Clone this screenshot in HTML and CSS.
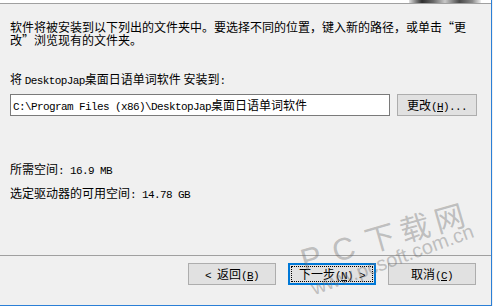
FILE: index.html
```html
<!DOCTYPE html>
<html lang="zh-CN">
<head>
<meta charset="utf-8">
<title>安装位置</title>
<link rel="stylesheet" href="styles.css">
</head>
<body>
<div class="window">
  <div class="header"><div class="banner"></div></div>
  <div class="content">
    <p class="intro">软件将被安装到以下列出的文件夹中。要选择不同的位置，键入新的路径，或单击“更改”浏览现有的文件夹。</p>
    <p class="label">将 <span class="a">DesktopJap</span>桌面日语单词软件 安装到<span class="a">:</span></p>
    <div class="path-row">
      <div class="path"><span class="a">C:\Program Files (x86)\DesktopJap</span>桌面日语单词软件</div>
      <button class="btn">更改<span class="a">(<u>H</u>)...</span></button>
    </div>
    <p class="info first">所需空间<span class="a">: 16.9 MB</span></p>
    <p class="info">选定驱动器的可用空间<span class="a">: 14.78 GB</span></p>
  </div>
  <div class="separator"></div>
  <div class="footer">
    <button class="btn"><span class="a">&lt; </span>返回<span class="a">(<u>B</u>)</span></button>
    <button class="btn default">下一步<span class="a">(<u>N</u>) &gt;</span></button>
    <button class="btn">取消<span class="a">(<u>C</u>)</span></button>
  </div>
  <div class="watermark">
    <span class="wm-big"><span class="wm-lat">PC</span>下载网</span>
    <span class="wm-small">www.pcsoft.com.cn</span>
  </div>
</div>
</body>
</html>
```

FILE: styles.css
```css
html, body {
  margin: 0;
  background: #f0f0f0;
}
body {
  width: 493px;
  height: 306px;
  overflow: hidden;
  font-family: "Noto Sans CJK SC", sans-serif;
  font-size: 12px;
  color: #000;
}
.window {
  position: relative;
  width: 492px;
  height: 306px;
  box-sizing: border-box;
  border-right: 1px solid #2b7fd6;
  border-bottom: 1px solid #2b7fd6;
  display: flex;
  flex-direction: column;
  overflow: hidden;
}
.header {
  height: 3px;
  flex: none;
  background: #fff;
  border-bottom: 1px solid #a0a0a0;
  display: flex;
  justify-content: flex-end;
}
.banner {
  width: 72px;
  margin-right: 10px;
  background: linear-gradient(90deg, #e0e0e0, #2e2e2e 18%, #6a6a6a 34%, #c8c8c8 50%, #4a4a4a 70%, #8a8a8a 88%, #f0f0f0);
}
.a {
  font-family: "Liberation Mono", monospace;
  font-size: 11px;
  letter-spacing: -0.6px;
}
.content {
  flex: 1;
  padding-left: 10px;
}
.intro {
  margin: 16px 0 0;
  width: 458px;
  line-height: 13px;
}
.label {
  margin: 26px 0 0;
  line-height: 13px;
}
.path-row {
  display: flex;
  gap: 7px;
  margin-top: 6px;
}
.path {
  width: 380px;
  height: 22px;
  box-sizing: border-box;
  border: 1px solid #7a7a7a;
  background: #fff;
  padding-left: 2px;
  line-height: 20px;
  white-space: nowrap;
  overflow: hidden;
}
.btn {
  position: relative;
  width: 80px;
  height: 22px;
  box-sizing: border-box;
  padding: 0;
  border: 1px solid #adadad;
  background: #e1e1e1;
  font-family: "Noto Sans CJK SC", sans-serif;
  font-size: 12px;
  color: #000;
  line-height: 20px;
}
.footer .btn {
  width: 88px;
}
.btn.default {
  border-color: #0078d7;
  box-shadow: inset 0 0 0 1px #0078d7;
}
.btn.default::after {
  content: "";
  position: absolute;
  inset: 2px;
  border: 1px dotted #000;
}
.info {
  margin: 8px 0 0;
  line-height: 13px;
}
.info.first {
  margin-top: 46px;
}
.separator {
  flex: none;
  height: 1px;
  background: #a0a0a0;
}
.footer {
  flex: none;
  height: 49px;
  box-sizing: border-box;
  display: flex;
  justify-content: flex-end;
  align-items: flex-start;
  gap: 12px;
  padding: 7px 15px 0 0;
}
.watermark {
  position: absolute;
  inset: 0;
  pointer-events: none;
}
.wm-big {
  position: absolute;
  left: 306px;
  top: 242px;
  font-family: "Noto Sans CJK SC", sans-serif;
  font-size: 30px;
  line-height: 32px;
  letter-spacing: 6px;
  color: rgba(110, 110, 110, 0.4);
  transform: rotate(-16deg);
  transform-origin: left bottom;
  white-space: nowrap;
}
.wm-lat {
  font-family: "Liberation Sans", sans-serif;
  font-size: 31px;
  letter-spacing: 12px;
}
.wm-small {
  position: absolute;
  left: 316px;
  top: 277px;
  font-family: "Liberation Sans", sans-serif;
  font-size: 20px;
  line-height: 23px;
  color: rgba(110, 110, 110, 0.4);
  transform: rotate(-20deg);
  transform-origin: left bottom;
  white-space: nowrap;
}
```
